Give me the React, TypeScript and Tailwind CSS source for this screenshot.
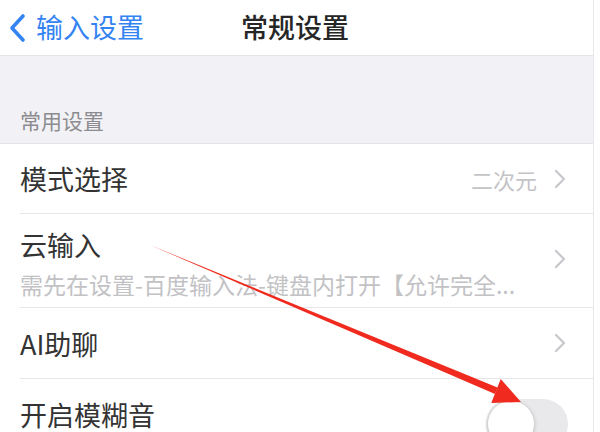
import React from 'react';

const font = { fontFamily: '"Noto Sans CJK SC", "Noto Sans", sans-serif' };

function Chevron() {
    return (
        <svg width="12" height="20" viewBox="0 0 12 20" className="shrink-0">
            <path d="M2 2 L10 10 L2 18" fill="none" stroke="#c7c7cc" strokeWidth="2.2" strokeLinecap="round" strokeLinejoin="round" />
        </svg>
    );
}

function Row({ children, className }: { children: React.ReactNode; className: string }) {
    return (
        <div className={'flex pl-5 ' + className}>
            <div className="flex flex-1 items-center border-b border-[#e6e6ea] pr-[27px]">{children}</div>
        </div>
    );
}

export default function App() {
    return (
        <div className="relative w-[600px] h-[432px] overflow-hidden bg-white" style={font}>
            <div className="w-[594px] h-full border-r border-[#e8e8ec] flex flex-col">
                {/* header */}
                <div className="h-[56px] shrink-0 border-b border-[#e4e4e8] grid grid-cols-[1fr_auto_1fr] items-center">
                    <div className="flex items-center pl-[8px] text-[#3483f2] text-[27px] leading-none">
                        <svg width="18" height="30" viewBox="0 0 18 30" className="mr-[10px]">
                            <path d="M15 3 L4 15 L15 27" fill="none" stroke="#3483f2" strokeWidth="3.6" strokeLinecap="round" strokeLinejoin="round" />
                        </svg>
                        <span className="-mt-[2px]">输入设置</span>
                    </div>
                    <div className="text-[27px] leading-none text-[#262626] font-medium -mt-[2px] -ml-[3px]">常规设置</div>
                    <div />
                </div>

                {/* section title */}
                <div className="h-[88px] shrink-0 bg-[#f2f2f6] border-b border-[#e4e4e8] flex items-end pl-5 pb-[8px]">
                    <span className="text-[21px] leading-[30px] text-[#8c8c90]">常用设置</span>
                </div>

                <Row className="h-[70px] shrink-0">
                    <span className="text-[27px] leading-none text-[#333]">模式选择</span>
                    <span className="ml-auto text-[22px] leading-none text-[#c4c4c7] mr-[17px]">二次元</span>
                    <Chevron />
                </Row>

                <Row className="h-[94px] shrink-0">
                    <div className="flex flex-col flex-1 self-stretch pt-[17px] min-w-0">
                        <span className="text-[27px] leading-[28px] text-[#333]">云输入</span>
                        <span className="mt-[11px] text-[23px] leading-[28px] text-[#c2c2c5] whitespace-nowrap">
                            需先在设置-百度输入法-键盘内打开【允许完全...
                        </span>
                    </div>
                    <div className="ml-[20px] -mt-[4px]">
                        <Chevron />
                    </div>
                </Row>

                <Row className="h-[71px] shrink-0">
                    <span className="text-[27px] leading-none text-[#333]">AI助聊</span>
                    <span className="ml-auto" />
                    <Chevron />
                </Row>

                <div className="h-[70px] shrink-0 flex items-center pl-5 pr-[25px]">
                    <span className="text-[27px] leading-none text-[#333]">开启模糊音</span>
                    <div className="ml-auto mt-[20px] w-[82px] h-[50px] rounded-full bg-[#e9e9eb] p-[2px] flex">
                        <div className="w-[46px] h-[46px] rounded-full bg-white shadow-[0_1px_4px_rgba(0,0,0,0.25)]" />
                    </div>
                </div>
            </div>

            {/* red annotation arrow */}
            <svg className="absolute inset-0 pointer-events-none" width="600" height="432" viewBox="0 0 600 432">
                <polygon points="150,245 497.5,387.5 495,394" fill="#f02a1e" />
                <polygon points="500.7,379 491.3,403 521,402" fill="#f02a1e" />
            </svg>
        </div>
    );
}
